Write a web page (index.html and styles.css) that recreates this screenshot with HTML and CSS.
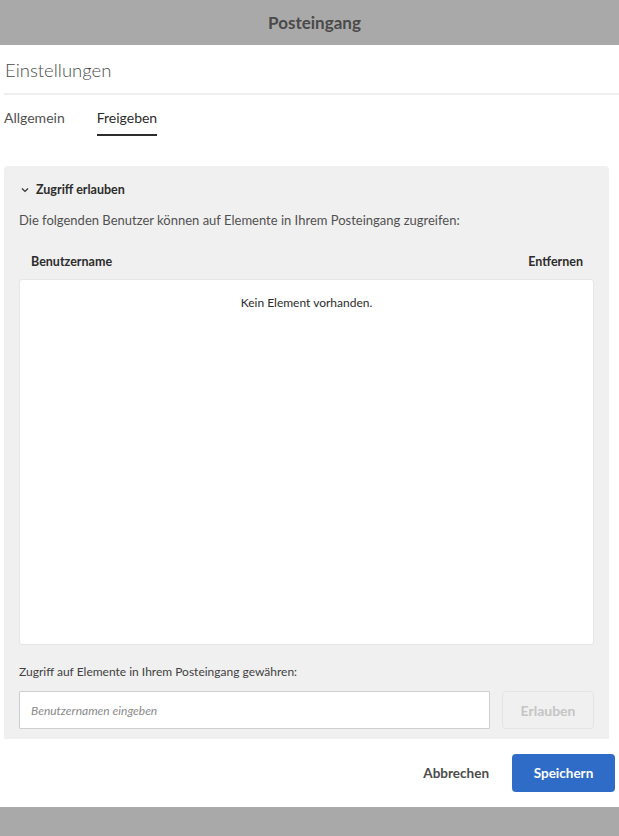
FILE: index.html
```html
<!DOCTYPE html>
<html lang="de">
<head>
<meta charset="utf-8">
<title>Posteingang</title>
<link rel="stylesheet" href="styles.css">
</head>
<body>
<div class="app">
  <header class="topbar">Posteingang</header>
  <main class="content">
    <h1 class="page-title">Einstellungen</h1>
    <nav class="tabs">
      <span class="tab">Allgemein</span>
      <span class="tab active">Freigeben</span>
    </nav>
    <section class="panel">
      <div class="panel-head">
        <svg class="chev" width="8" height="6" viewBox="0 0 8 6"><path d="M1 1.5 L4 4.5 L7 1.5" fill="none" stroke="#333" stroke-width="1.2"/></svg>
        <span>Zugriff erlauben</span>
      </div>
      <p class="desc">Die folgenden Benutzer können auf Elemente in Ihrem Posteingang zugreifen:</p>
      <div class="cols">
        <span>Benutzername</span>
        <span>Entfernen</span>
      </div>
      <div class="list">
        <div class="empty">Kein Element vorhanden.</div>
      </div>
      <p class="label">Zugriff auf Elemente in Ihrem Posteingang gewähren:</p>
      <div class="add-row">
        <input class="user-input" type="text" placeholder="Benutzernamen eingeben">
        <button class="btn-allow" disabled>Erlauben</button>
      </div>
    </section>
    <footer class="actions">
      <button class="btn-cancel">Abbrechen</button>
      <button class="btn-save">Speichern</button>
    </footer>
  </main>
  <div class="bottombar"></div>
</div>
</body>
</html>
```
FILE: styles.css
```css
* { box-sizing: border-box; }
html, body { margin: 0; padding: 0; }
body {
  font-family: Lato, "Open Sans", sans-serif;
  color: #4b4b4b;
  background: #fff;
  width: 619px;
  height: 836px;
  overflow: hidden;
}
.app { display: flex; flex-direction: column; height: 836px; }
.topbar {
  height: 45px;
  background: #a9a9a9;
  display: flex;
  align-items: center;
  justify-content: center;
  padding-left: 10px;
  font-weight: 700;
  font-size: 17px;
  color: #4a4a4a;
}
.content { flex: 1; display: flex; flex-direction: column; }
.page-title {
  margin: 0 0 0 4px;
  padding: 14px 0 0 1px;
  height: 50px;
  font-weight: 300;
  font-size: 18.5px;
  color: #4b4b4b;
  border-bottom: 2px solid #efefef;
}
.tabs {
  display: flex;
  gap: 32px;
  padding: 13px 0 0 4px;
  height: 71px;
}
.tab {
  font-size: 14px;
  color: #505050;
  height: 28px;
  padding-top: 1px;
}
.tab.active {
  color: #2c2c2c;
  border-bottom: 2px solid #2c2c2c;
}
.panel {
  margin: 0 10px 0 4px;
  background: #f0f0f0;
  border-radius: 4px 4px 0 0;
  padding: 15px 15px 10px 15px;
}
.panel-head {
  display: flex;
  align-items: center;
  gap: 7px;
  padding-left: 2px;
  height: 17px;
  font-weight: 700;
  font-size: 12.5px;
  color: #2c2c2c;
}
.chev { display: block; }
.desc {
  margin: 13px 0 0;
  font-size: 13px;
  line-height: 18px;
  color: #505050;
}
.cols {
  display: flex;
  justify-content: space-between;
  margin-top: 24px;
  padding: 0 11px 0 12px;
  font-weight: 700;
  font-size: 12.5px;
  color: #2c2c2c;
  height: 17px;
  line-height: 17px;
}
.list {
  margin-top: 9px;
  height: 366px;
  background: #fff;
  border: 1px solid #e6e6e6;
  border-radius: 3px;
}
.empty {
  text-align: center;
  font-size: 12px;
  color: #2c2c2c;
  padding-top: 15px;
}
.label {
  margin: 19px 0 0;
  font-size: 12px;
  line-height: 16px;
  color: #404040;
}
.add-row {
  display: flex;
  gap: 12px;
  margin-top: 11px;
}
.user-input {
  flex: 1;
  height: 38px;
  border: 1px solid #cfcfcf;
  border-radius: 1px;
  padding: 0 11px;
  font-family: Lato, sans-serif;
  font-size: 12px;
  background: #fff;
  outline: none;
}
.user-input::placeholder { color: #8a8a8a; font-style: italic; }
.btn-allow {
  width: 92px;
  height: 38px;
  border: 1px solid #e4e4e4;
  background: #f0f0f0;
  border-radius: 4px;
  font-family: Lato, sans-serif;
  font-weight: 700;
  font-size: 14px;
  color: #c5c5c5;
}
.actions {
  display: flex;
  justify-content: flex-end;
  align-items: flex-start;
  gap: 23px;
  padding: 15px 4px 0 0;
  height: 68px;
}
.btn-cancel {
  height: 38px;
  border: 0;
  background: none;
  padding: 0;
  font-family: Lato, sans-serif;
  font-weight: 700;
  font-size: 13.5px;
  color: #4b4b4b;
}
.btn-save {
  width: 103px;
  height: 38px;
  border: 0;
  border-radius: 4px;
  background: #2e6cc8;
  color: #fff;
  font-family: Lato, sans-serif;
  font-weight: 700;
  font-size: 13.5px;
}
.bottombar {
  height: 29px;
  background: #a9a9a9;
}
```
